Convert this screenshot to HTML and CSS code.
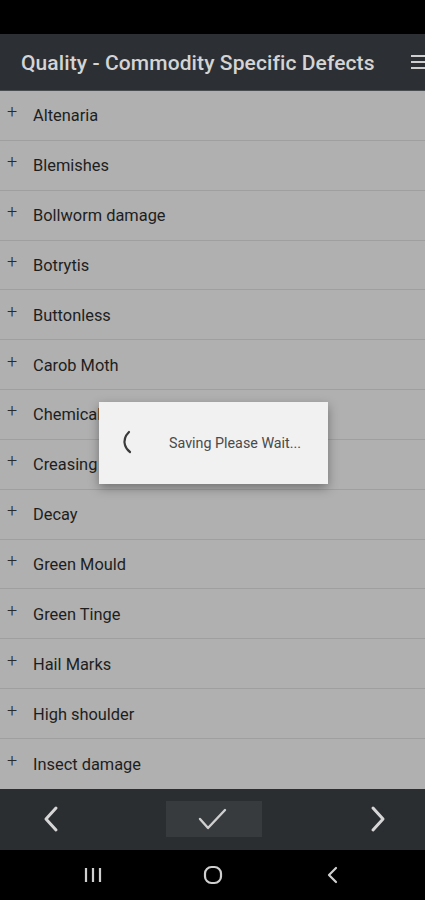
FILE: index.html
```html
<!DOCTYPE html>
<html>
<head>
<meta charset="utf-8">
<link rel="stylesheet" href="styles.css">
</head>
<body>
<div class="screen">
  <div class="status"></div>
  <div class="header">
    <span class="title">Quality - Commodity Specific Defects</span>
    <span class="burger"><i></i><i></i><i></i></span>
  </div>
  <ul class="list">
    <li><span class="plus">+</span><span class="label">Altenaria</span></li>
    <li><span class="plus">+</span><span class="label">Blemishes</span></li>
    <li><span class="plus">+</span><span class="label">Bollworm damage</span></li>
    <li><span class="plus">+</span><span class="label">Botrytis</span></li>
    <li><span class="plus">+</span><span class="label">Buttonless</span></li>
    <li><span class="plus">+</span><span class="label">Carob Moth</span></li>
    <li><span class="plus">+</span><span class="label">Chemical damage</span></li>
    <li><span class="plus">+</span><span class="label">Creasing</span></li>
    <li><span class="plus">+</span><span class="label">Decay</span></li>
    <li><span class="plus">+</span><span class="label">Green Mould</span></li>
    <li><span class="plus">+</span><span class="label">Green Tinge</span></li>
    <li><span class="plus">+</span><span class="label">Hail Marks</span></li>
    <li><span class="plus">+</span><span class="label">High shoulder</span></li>
    <li class="last"><span class="plus">+</span><span class="label">Insect damage</span></li>
  </ul>
  <div class="toolbar">
    <div class="tb-btn">
      <svg width="22" height="30" viewBox="0 0 22 30"><path d="M16 4 L6 15 L16 26" fill="none" stroke="#d6d6d6" stroke-width="3" stroke-linecap="round" stroke-linejoin="round"/></svg>
    </div>
    <div class="tb-btn check">
      <svg width="32" height="26" viewBox="0 0 32 26"><path d="M3 13 L11 22 L28 4" fill="none" stroke="#cfcfcf" stroke-width="2.4" stroke-linecap="round" stroke-linejoin="round"/></svg>
    </div>
    <div class="tb-btn">
      <svg width="22" height="30" viewBox="0 0 22 30"><path d="M6 4 L16 15 L6 26" fill="none" stroke="#d6d6d6" stroke-width="3" stroke-linecap="round" stroke-linejoin="round"/></svg>
    </div>
  </div>
  <div class="navbar">
    <svg width="20" height="18" viewBox="0 0 20 18"><path d="M3 2 V16 M10 2 V16 M17 2 V16" stroke="#cfcfcf" stroke-width="2.2"/></svg>
    <svg width="22" height="22" viewBox="0 0 22 22"><rect x="3" y="3" width="16" height="16" rx="6.5" fill="none" stroke="#cfcfcf" stroke-width="2.2"/></svg>
    <svg width="16" height="20" viewBox="0 0 16 20"><path d="M11 3 L4 10 L11 17" fill="none" stroke="#cfcfcf" stroke-width="2.2" stroke-linecap="round" stroke-linejoin="round"/></svg>
  </div>
  <div class="dialog">
    <svg class="spinner" width="14" height="24" viewBox="0 0 14 24"><path d="M8 2 Q2 8 4 15 Q5 19 9 22" fill="none" stroke="#3a3a3a" stroke-width="2.2" stroke-linecap="round"/></svg>
    <span class="msg">Saving Please Wait...</span>
  </div>
</div>
</body>
</html>
```
FILE: styles.css
```css
* { box-sizing: border-box; }
html, body { margin: 0; padding: 0; background: #000; }
body { font-family: Roboto, "Liberation Sans", sans-serif; }
.screen {
  position: relative;
  width: 425px;
  height: 900px;
  overflow: hidden;
  display: flex;
  flex-direction: column;
  background: #b0b0b0;
}
.status { height: 34px; background: #000; flex: none; }
.header {
  height: 57px;
  flex: none;
  background: #2c3034;
  border-bottom: 1px solid #4a4d50;
  display: flex;
  align-items: center;
  padding-left: 21px;
  padding-top: 2px;
  white-space: nowrap;
}
.title {
  color: #d4d4d4;
  font-size: 21px;
  font-weight: 500;
  letter-spacing: 0.1px;
}
.burger {
  margin-left: 36px;
  display: flex;
  flex-direction: column;
  gap: 4px;
  flex: none;
  margin-top: -2px;
}
.burger i {
  display: block;
  width: 18px;
  height: 2px;
  background: #cfcfcf;
}
.list {
  list-style: none;
  margin: 0;
  padding: 0;
  flex: none;
  background: #b0b0b0;
}
.list li {
  height: 49.85px;
  display: flex;
  align-items: center;
  border-bottom: 1px solid #9f9f9f;
  padding-left: 6px;
  padding-top: 1px;
}
.list li.last { border-bottom: none; }
.plus {
  width: 27px;
  font-size: 18px;
  color: #2a2a2a;
  font-weight: 300;
  margin-top: -8px;
  padding-left: 1px;
}
.label {
  font-size: 16.4px;
  color: #1e1e1e;
}
.toolbar {
  height: 61px;
  flex: none;
  background: #2b2e31;
  display: flex;
  align-items: center;
  justify-content: space-between;
  padding: 0 36px 0 40px;
}
.tb-btn {
  display: flex;
  align-items: center;
  justify-content: center;
  width: 22px;
  height: 36px;
}
.tb-btn.check {
  width: 96px;
  background: #373b3e;
  margin-left: -2px;
}
.tb-btn.check svg { margin-left: -1px; }
.navbar {
  flex: 1;
  background: #000;
  display: flex;
  align-items: center;
  justify-content: space-between;
  padding: 0 84px 0 83px;
}
.navbar svg:nth-child(2) { margin-left: -3px; }
.dialog {
  position: absolute;
  left: 99px;
  top: 402px;
  width: 229px;
  height: 82px;
  background: #f1f1f1;
  box-shadow: 0 4px 10px rgba(0,0,0,0.35);
  display: flex;
  align-items: center;
  padding-left: 22px;
}
.spinner { margin-right: 34px; margin-top: -3px; }
.msg {
  font-size: 14.3px;
  color: #4a4a4a;
}
```
